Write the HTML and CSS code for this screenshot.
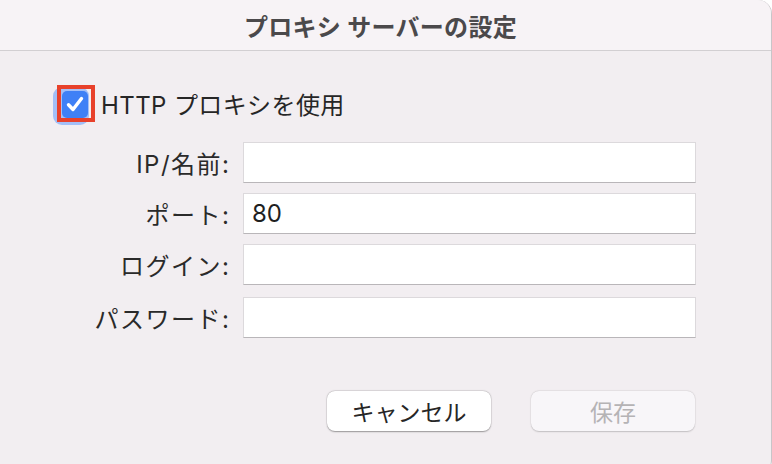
FILE: index.html
```html
<!DOCTYPE html>
<html lang="ja">
<head>
<meta charset="utf-8">
<title>プロキシ サーバーの設定</title>
<link rel="stylesheet" href="styles.css">
</head>
<body>
<div class="window">
  <header class="titlebar">
    <h1 class="title">プロキシ サーバーの設定</h1>
  </header>
  <main class="content">
    <label class="check-row">
      <span class="check-wrap">
        <span class="focus-ring"></span>
        <span class="checkbox">
          <svg viewBox="0 0 26 26" width="26" height="26" aria-hidden="true">
            <path d="M6.5 13.8 L11 18.5 L19.5 7.5" fill="none" stroke="#fff" stroke-width="3.4" stroke-linecap="round" stroke-linejoin="round"/>
          </svg>
        </span>
        <span class="highlight"></span>
      </span>
      <span class="check-label">HTTP プロキシを使用</span>
    </label>
    <div class="form">
      <span class="label">IP/名前:</span>
      <div class="field"></div>
      <span class="label">ポート:</span>
      <div class="field">80</div>
      <span class="label">ログイン:</span>
      <div class="field"></div>
      <span class="label label-last">パスワード:</span>
      <div class="field field-last"></div>
    </div>
    <div class="buttons">
      <button class="btn btn-cancel">キャンセル</button>
      <button class="btn btn-save" disabled>保存</button>
    </div>
  </main>
</div>
</body>
</html>
```
FILE: styles.css
```css
html, body {
  margin: 0;
  padding: 0;
  background: #ffffff;
  overflow: hidden;
}
body {
  width: 772px;
  height: 464px;
  font-family: "Inter", "Noto Sans CJK JP", sans-serif;
  color: #262626;
}
.window {
  width: 771px;
  height: 474px;
  background: #f2eef1;
  border-right: 1px solid #c8c5c8;
  border-top-right-radius: 14px;
  border-bottom-right-radius: 14px;
  overflow: hidden;
}
.titlebar {
  height: 50px;
  background: #f7f3f6;
  border-bottom: 1px solid #d2cfd2;
  display: flex;
  align-items: center;
  justify-content: center;
}
.title {
  margin: 0;
  font-size: 24px;
  font-weight: 700;
  color: #4b494b;
  letter-spacing: 0.3px;
  padding-right: 10px;
}
.content {
  display: flex;
  flex-direction: column;
}
.check-row {
  display: flex;
  align-items: center;
  margin-top: 38px;
  margin-left: 62px;
  height: 28px;
}
.check-wrap {
  position: relative;
  width: 26px;
  height: 27px;
}
.checkbox {
  position: relative;
  display: block;
  width: 26px;
  height: 27px;
  border-radius: 5px;
  background: #3f80f6;
  z-index: 1;
}
.checkbox svg {
  display: block;
  margin-top: 1px;
}
.focus-ring {
  position: absolute;
  left: -9px;
  top: -3px;
  width: 36px;
  height: 38px;
  border-radius: 9px;
  background: #a3bff7;
}
.highlight {
  position: absolute;
  left: -5px;
  top: -5px;
  width: 30px;
  height: 29px;
  border: 4px solid #e8412b;
  z-index: 2;
}
.check-label {
  margin-left: 13px;
  font-size: 24px;
  letter-spacing: 0.4px;
  color: #262626;
}
.form {
  display: grid;
  grid-template-columns: 229px 453px;
  column-gap: 14px;
  row-gap: 10px;
  margin-top: 25px;
  align-items: center;
}
.label {
  text-align: right;
  font-size: 24px;
  letter-spacing: 1.5px;
  margin-right: -1.5px;
  color: #2a2a2a;
}
.label-last,
.field-last {
  margin-top: 2px;
}
.field {
  height: 41px;
  box-sizing: border-box;
  background: #ffffff;
  border: 1px solid #dcd9dc;
  border-bottom-color: #b9b6b9;
  font-size: 24px;
  line-height: 39px;
  padding-left: 8px;
  color: #1f1f1f;
}
.buttons {
  display: flex;
  justify-content: flex-end;
  gap: 40px;
  margin-top: 53px;
  padding-right: 76px;
}
.btn {
  width: 164px;
  height: 40px;
  border-radius: 8px;
  font-family: "Inter", "Noto Sans CJK JP", sans-serif;
  font-size: 23px;
  border: none;
  padding: 0;
}
.btn-cancel {
  background: #ffffff;
  color: #262626;
  box-shadow: 0 0.5px 1.5px rgba(0,0,0,0.35), 0 0 0 0.5px rgba(0,0,0,0.08);
}
.btn-save {
  background: #f8f6f9;
  color: #b5b3b5;
  box-shadow: 0 0.5px 1.5px rgba(0,0,0,0.18), 0 0 0 0.5px rgba(0,0,0,0.05);
}
```
